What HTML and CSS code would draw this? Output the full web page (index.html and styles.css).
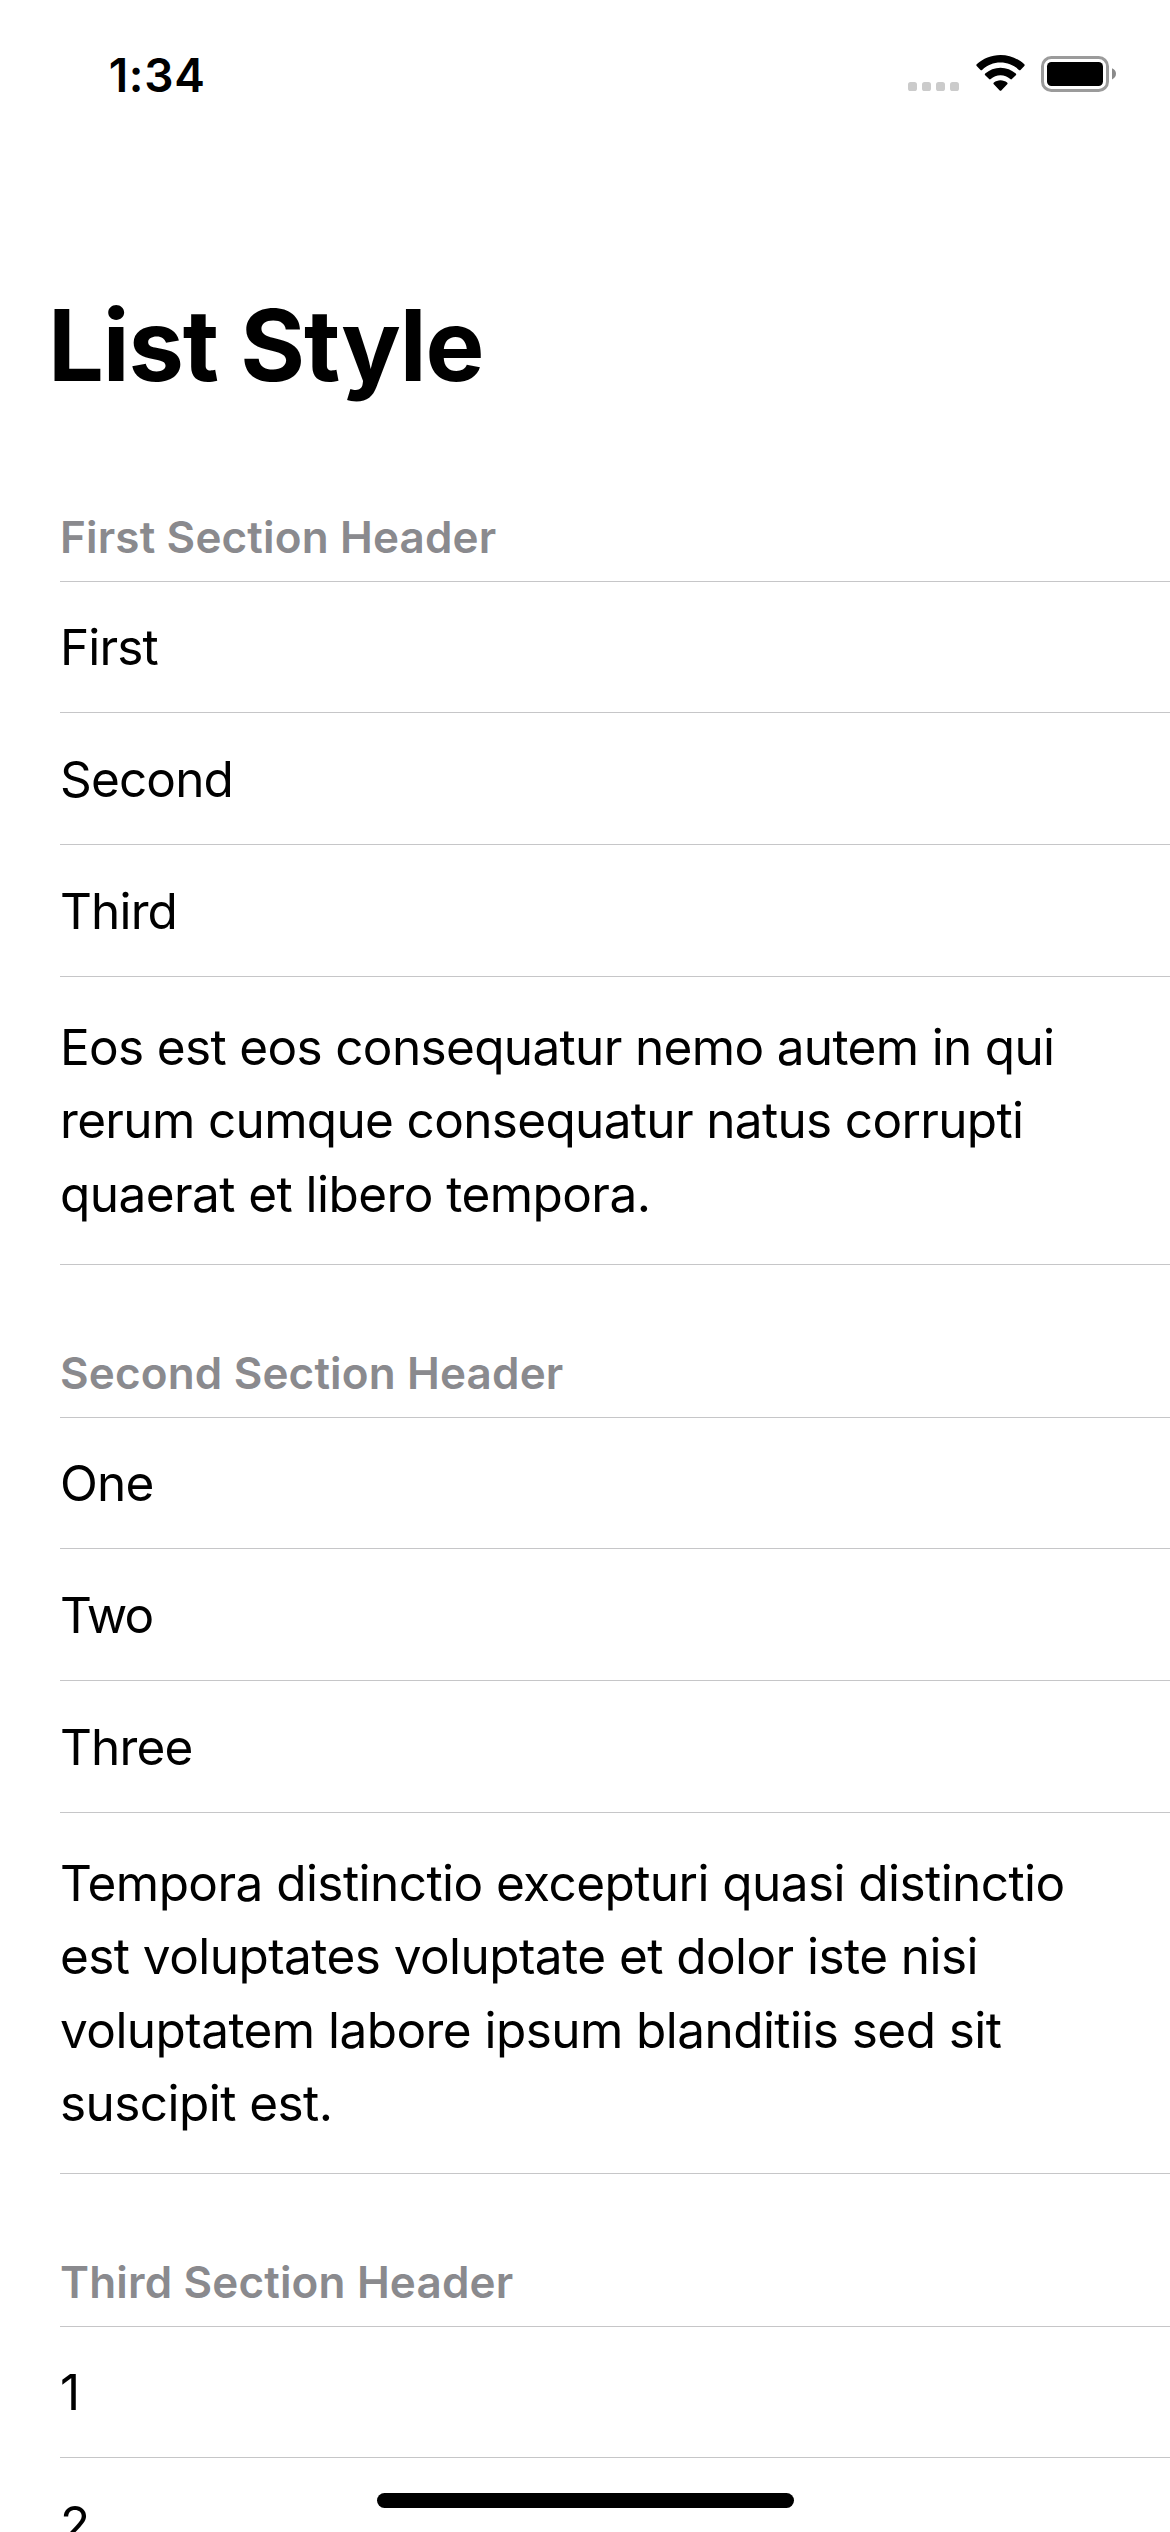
FILE: index.html
```html
<!DOCTYPE html>
<html lang="en">
<head>
<meta charset="utf-8">
<title>List Style</title>
<link rel="stylesheet" href="styles.css">
</head>
<body>
<header class="status">
  <span class="time">1:34</span>
  <div class="indicators">
    <svg class="cell" width="51" height="9" viewBox="0 0 51 9" fill="#cbcbcb"><rect width="9" height="9" rx="2.600"/><rect x="14" width="9" height="9" rx="2.600"/><rect x="28" width="9" height="9" rx="2.600"/><rect x="42" width="9" height="9" rx="2.600"/></svg>
    <svg class="wifi" width="49" height="36" viewBox="0 0 49 36"><path d="M24.500 0C33.600 0 42 3.500 48.300 9.300q.8.800 0 1.600l-3.800 4q-.8.700-1.600 0C38 10.300 31.500 7.600 24.500 7.600S11 10.300 6.100 14.900q-.8.700-1.600 0L.7 10.900q-.8-.8 0-1.600C7 3.500 15.400 0 24.500 0zM24.500 12.700c5.800 0 11.200 2.200 15.300 5.900q.8.800 0 1.600l-3.900 3.900q-.8.700-1.600 0c-2.700-2.400-6.100-3.800-9.800-3.800s-7.100 1.400-9.800 3.800q-.8.700-1.600 0l-3.900-3.900q-.8-.8 0-1.600c4.100-3.700 9.500-5.900 15.300-5.900zM24.500 25.300c2.500 0 4.800.9 6.600 2.300q.9.800.1 1.600l-5.900 6.200q-.8.800-1.600 0l-5.900-6.200q-.8-.8.100-1.600c1.800-1.400 4.100-2.300 6.600-2.300z"/></svg>
    <svg class="battery" width="75" height="36" viewBox="0 0 75 36"><rect x="1.500" y="1.500" width="65" height="33" rx="8.800" fill="none" stroke="#9b9b9b" stroke-width="3"/><rect x="6" y="6" width="56" height="24" rx="4.500"/><path d="M71 12.200q4 1.700 4 5.600t-4 5.600z" fill="#8a8a8a"/></svg>
  </div>
</header>
<main>
  <h1>List Style</h1>
  <section>
    <h2>First Section Header</h2>
    <ul>
      <li><span>First</span></li>
      <li><span>Second</span></li>
      <li><span>Third</span></li>
      <li class="long"><span>Eos est eos consequatur nemo autem in qui</span><span>rerum cumque consequatur natus corrupti</span><span class="wide">quaerat et libero tempora.</span></li>
    </ul>
  </section>
  <section>
    <h2>Second Section Header</h2>
    <ul>
      <li><span>One</span></li>
      <li><span class="tight">Two</span></li>
      <li><span>Three</span></li>
      <li class="long wide"><span>Tempora distinctio excepturi quasi distinctio</span><span>est voluptates voluptate et dolor iste nisi</span><span>voluptatem labore ipsum blanditiis sed sit</span><span>suscipit est.</span></li>
    </ul>
  </section>
  <section>
    <h2>Third Section Header</h2>
    <ul>
      <li><span>1</span></li>
      <li><span>2</span></li>
    </ul>
  </section>
</main>
<div class="home"></div>
</body>
</html>
```
FILE: styles.css
```css
* { box-sizing: border-box; }
body { margin: 0; height: 2532px; overflow: hidden; position: relative; background: #fff; color: #000; font-family: Inter, "Liberation Sans", sans-serif; }
.status { height: 141px; padding: 0 54px 0 108.700px; display: flex; justify-content: space-between; }
.time { margin-top: 46px; font-size: 46px; line-height: 58px; font-weight: 600; letter-spacing: 0.700px; }
.indicators { display: flex; align-items: flex-start; padding-top: 55px; }
.cell { margin: 27px 16.500px 0 0; }
.wifi { margin-right: 16.500px; }
.battery { margin-top: 1px; }
h1 { margin: 0; padding: 143px 0 0 48px; height: 357px; font-size: 99px; line-height: 122px; font-weight: 700; letter-spacing: -1.150px; white-space: nowrap; }
section { padding-left: 60px; }
section + section { padding-top: 69px; }
h2 { margin: 0; height: 84px; padding-top: 12px; border-bottom: 1px solid #c6c6c8; color: #8a8a8e; font-size: 44px; line-height: 54px; font-weight: 600; letter-spacing: 0.160px; }
ul { margin: 0; padding: 0; list-style: none; }
li { height: 132px; padding-top: 29px; border-bottom: 1px solid #c6c6c8; font-size: 49.500px; line-height: 74px; letter-spacing: -0.850px; white-space: nowrap; }
li:first-child { height: 131px; padding-top: 28px; }
li.long { height: auto; padding: 34px 0 32.800px; line-height: 73.400px; letter-spacing: -0.660px; }
li.wide, .wide { letter-spacing: -0.560px; }
li span { display: block; width: max-content; }
.tight { letter-spacing: -2px; }
.home { position: absolute; left: 377px; bottom: 24px; width: 417px; height: 15px; border-radius: 8px; background: #000; }
```
